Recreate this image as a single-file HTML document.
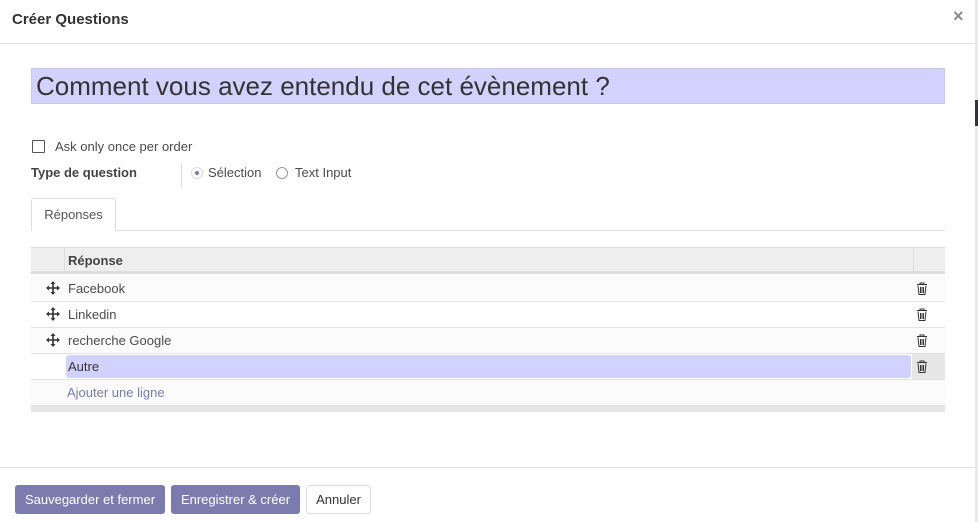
<!DOCTYPE html>
<html><head><meta charset="utf-8"><style>
*{box-sizing:border-box;margin:0;padding:0}
body{width:978px;height:522px;background:#fff;font-family:"Liberation Sans",sans-serif;font-size:13px;color:#4c4c4c;position:relative;overflow:hidden}
.a{position:absolute}
.row{position:absolute;left:31px;width:914px;height:26px;border-bottom:1px solid #e3e3e3;background:#fbfbfb}
.row span{position:absolute;left:37px;top:5px;color:#4c4c4c}
.mv{position:absolute;left:15px;top:5px}
.tr{position:absolute;left:885px;top:6px}
.btn{position:absolute;top:485px;height:29px;border-radius:3px;color:#fff;background:#7c7bad;font-size:13px;line-height:29px;text-align:center}
</style></head><body>
<div class="a" style="left:12px;top:11px;font-size:15px;font-weight:bold;color:#333">Créer Questions</div>
<div class="a" style="left:953px;top:6px;font-size:18px;font-weight:bold;color:#888">×</div>
<div class="a" style="left:0;top:43px;width:975px;height:1px;background:#e1e1e1"></div>
<div class="a" style="left:975px;top:0;width:3px;height:522px;background:#e9e9e9"></div>
<div class="a" style="left:975px;top:100px;width:3px;height:26px;background:#333344"></div>
<div class="a" style="left:31px;top:68px;width:914px;height:36px;background:#d2d2ff;border:1px solid #c8c8e8;font-size:26px;line-height:34px;padding-left:4px;color:#333">Comment vous avez entendu de cet évènement ?</div>
<div class="a" style="left:32px;top:140px;width:13px;height:13px;border:1px solid #555;border-radius:1px"></div>
<div class="a" style="left:55px;top:139px;color:#4c4c4c">Ask only once per order</div>
<div class="a" style="left:31px;top:165px;font-weight:bold;color:#444">Type de question</div>
<div class="a" style="left:181px;top:163px;width:1px;height:24px;background:#ddd"></div>
<div class="a" style="left:191px;top:167px;width:12px;height:12px;border-radius:50%;border:1px solid #ddd"><div style="margin:3px;width:4px;height:4px;border-radius:50%;background:#7c7bad"></div></div>
<div class="a" style="left:208px;top:165px">Sélection</div>
<div class="a" style="left:276px;top:167px;width:12px;height:12px;border-radius:50%;border:1px solid #999"></div>
<div class="a" style="left:295px;top:165px">Text Input</div>
<div class="a" style="left:31px;top:230px;width:914px;height:1px;background:#ddd"></div>
<div class="a" style="left:31px;top:198px;width:85px;height:33px;border:1px solid #ddd;border-bottom:none;background:#fff;border-radius:3px 3px 0 0;text-align:center;line-height:32px;color:#555">Réponses</div>
<div class="a" style="left:31px;top:247px;width:914px;height:27px;background:#eee;border-top:1px solid #ddd;border-bottom:3px solid #ddd"></div>
<div class="a" style="left:64px;top:247px;width:1px;height:27px;background:#ddd"></div>
<div class="a" style="left:913px;top:247px;width:1px;height:27px;background:#ddd"></div>
<div class="a" style="left:68px;top:253px;font-weight:bold;color:#444">Réponse</div>
<div class="row" style="top:276px"><svg class="mv" width="14" height="14" viewBox="0 0 14 14"><path d="M7 1v12M1 7h12" stroke="#333" stroke-width="1.6"/><path d="M7 0l-2.5 3h5zM7 14l-2.5-3h5zM0 7l3-2.5v5zM14 7l-3-2.5v5z" fill="#333"/></svg><span>Facebook</span><svg class="tr" width="12" height="13" viewBox="0 0 12 13"><path d="M1 2.5h10M4 2.5V1h4v1.5M2 3.5l1 9h6l1-9M4.5 5v6M6 5v6M7.5 5v6" stroke="#333" fill="none"/></svg></div>
<div class="row" style="top:302px;background:#fff"><svg class="mv" width="14" height="14" viewBox="0 0 14 14"><path d="M7 1v12M1 7h12" stroke="#333" stroke-width="1.6"/><path d="M7 0l-2.5 3h5zM7 14l-2.5-3h5zM0 7l3-2.5v5zM14 7l-3-2.5v5z" fill="#333"/></svg><span>Linkedin</span><svg class="tr" width="12" height="13" viewBox="0 0 12 13"><path d="M1 2.5h10M4 2.5V1h4v1.5M2 3.5l1 9h6l1-9M4.5 5v6M6 5v6M7.5 5v6" stroke="#333" fill="none"/></svg></div>
<div class="row" style="top:328px"><svg class="mv" width="14" height="14" viewBox="0 0 14 14"><path d="M7 1v12M1 7h12" stroke="#333" stroke-width="1.6"/><path d="M7 0l-2.5 3h5zM7 14l-2.5-3h5zM0 7l3-2.5v5zM14 7l-3-2.5v5z" fill="#333"/></svg><span>recherche Google</span><svg class="tr" width="12" height="13" viewBox="0 0 12 13"><path d="M1 2.5h10M4 2.5V1h4v1.5M2 3.5l1 9h6l1-9M4.5 5v6M6 5v6M7.5 5v6" stroke="#333" fill="none"/></svg></div>
<div class="row" style="top:354px;background:#fff"><div class="a" style="left:35px;top:1px;width:845px;height:23px;background:#d2d2ff;border-radius:3px"></div><div class="a" style="left:881px;top:0;width:33px;height:25px;background:#e6e6e6"></div><span style="color:#333">Autre</span><svg class="tr" width="12" height="13" viewBox="0 0 12 13"><path d="M1 2.5h10M4 2.5V1h4v1.5M2 3.5l1 9h6l1-9M4.5 5v6M6 5v6M7.5 5v6" stroke="#333" fill="none"/></svg></div>
<div class="row" style="top:380px"><span style="left:36px;color:#7c7bad">Ajouter une ligne</span></div>
<div class="a" style="left:31px;top:406px;width:914px;height:6px;background:#e6e6e6"></div>
<div class="a" style="left:0;top:467px;width:975px;height:1px;background:#e1e1e1"></div>
<div class="btn" style="left:15px;width:150px">Sauvegarder et fermer</div>
<div class="btn" style="left:171px;width:129px">Enregistrer &amp; créer</div>
<div class="btn" style="left:306px;width:65px;background:#fff;color:#333;border:1px solid #ddd;line-height:27px">Annuler</div>
</body></html>
